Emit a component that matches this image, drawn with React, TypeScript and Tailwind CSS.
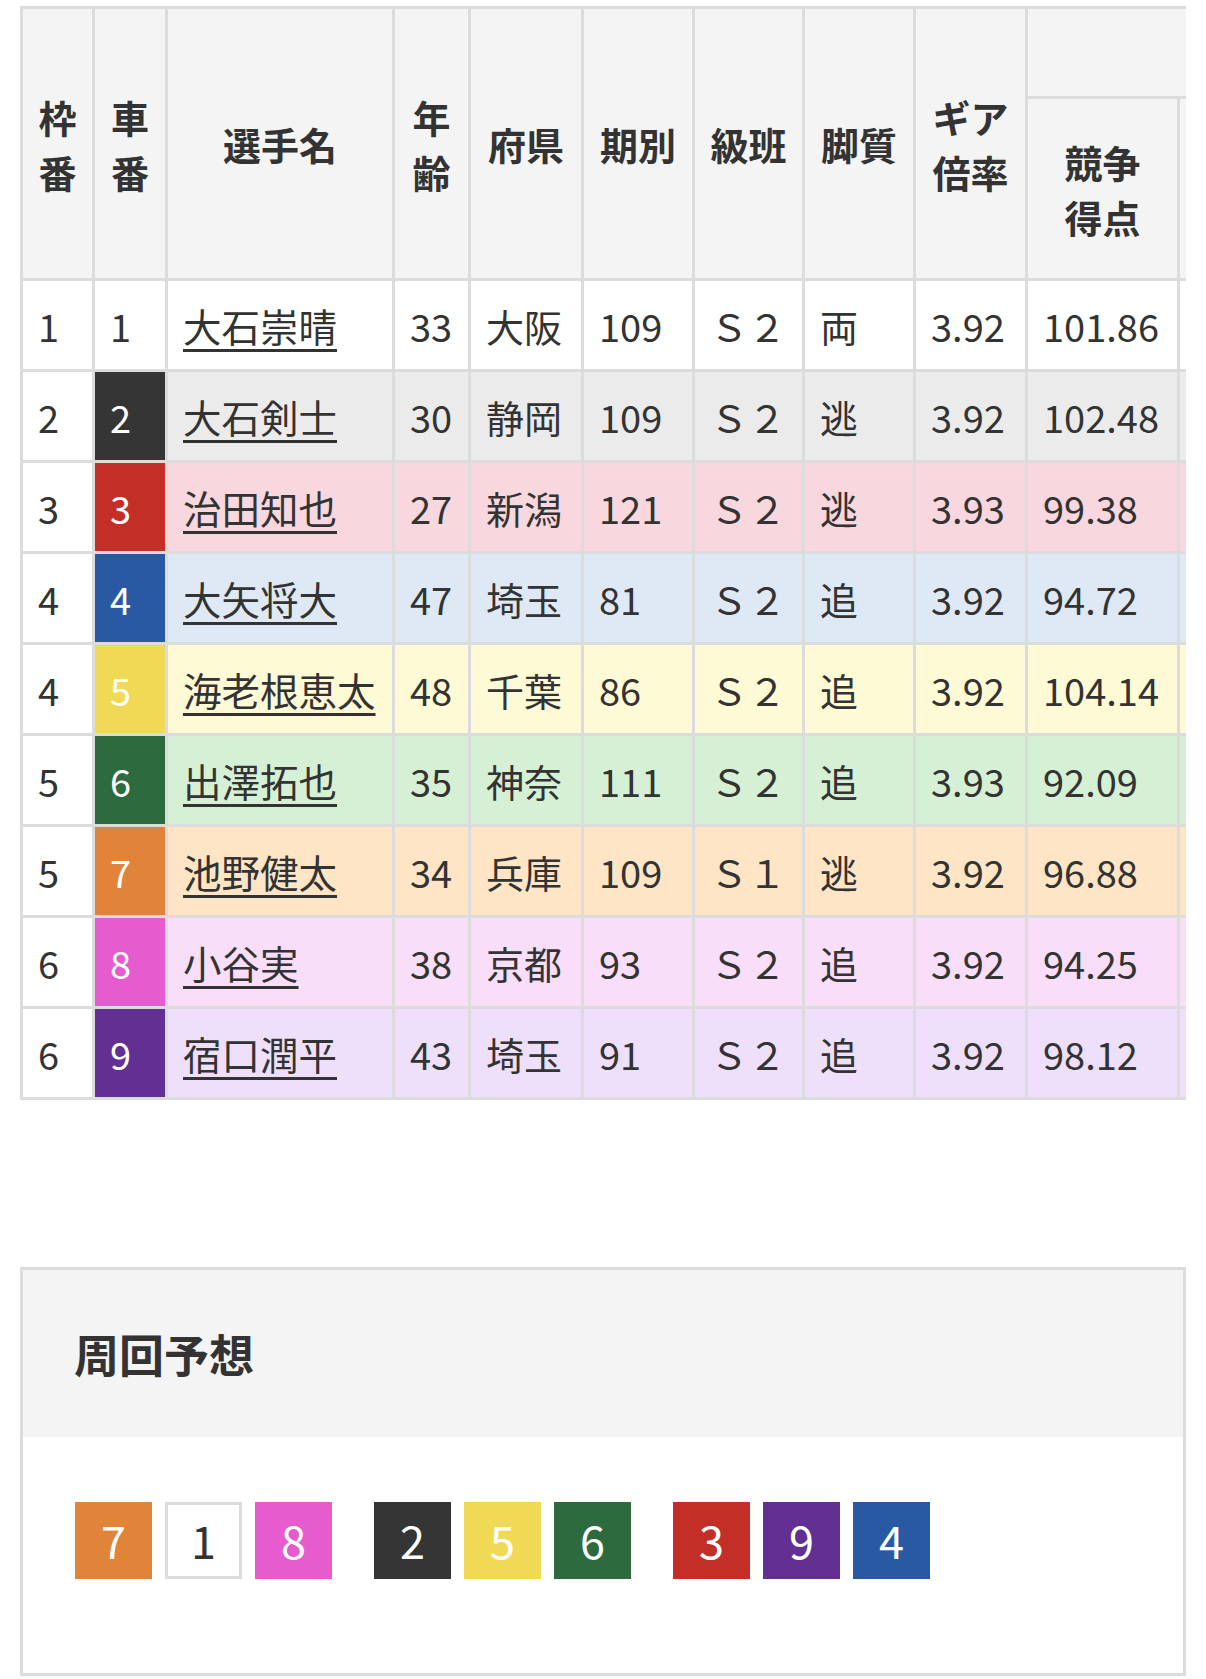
import React from 'react';

type Racer = {
  waku: number;
  car: number;
  name: string;
  age: number;
  pref: string;
  term: number;
  cls: string;
  leg: string;
  gear: string;
  score: string;
};

const racers: Racer[] = [
  { waku: 1, car: 1, name: '大石崇晴', age: 33, pref: '大阪', term: 109, cls: 'Ｓ２', leg: '両', gear: '3.92', score: '101.86' },
  { waku: 2, car: 2, name: '大石剣士', age: 30, pref: '静岡', term: 109, cls: 'Ｓ２', leg: '逃', gear: '3.92', score: '102.48' },
  { waku: 3, car: 3, name: '治田知也', age: 27, pref: '新潟', term: 121, cls: 'Ｓ２', leg: '逃', gear: '3.93', score: '99.38' },
  { waku: 4, car: 4, name: '大矢将大', age: 47, pref: '埼玉', term: 81, cls: 'Ｓ２', leg: '追', gear: '3.92', score: '94.72' },
  { waku: 4, car: 5, name: '海老根恵太', age: 48, pref: '千葉', term: 86, cls: 'Ｓ２', leg: '追', gear: '3.92', score: '104.14' },
  { waku: 5, car: 6, name: '出澤拓也', age: 35, pref: '神奈', term: 111, cls: 'Ｓ２', leg: '追', gear: '3.93', score: '92.09' },
  { waku: 5, car: 7, name: '池野健太', age: 34, pref: '兵庫', term: 109, cls: 'Ｓ１', leg: '逃', gear: '3.92', score: '96.88' },
  { waku: 6, car: 8, name: '小谷実', age: 38, pref: '京都', term: 93, cls: 'Ｓ２', leg: '追', gear: '3.92', score: '94.25' },
  { waku: 6, car: 9, name: '宿口潤平', age: 43, pref: '埼玉', term: 91, cls: 'Ｓ２', leg: '追', gear: '3.92', score: '98.12' },
];

// 車番の色
const carColor: Record<number, string> = {
  1: 'bg-white text-[#333]',
  2: 'bg-[#353535] text-white',
  3: 'bg-[#c32f27] text-white',
  4: 'bg-[#2a59a3] text-white',
  5: 'bg-[#f0da55] text-white',
  6: 'bg-[#2d6a3d] text-white',
  7: 'bg-[#e0843a] text-white',
  8: 'bg-[#e65ccf] text-white',
  9: 'bg-[#623093] text-white',
};

// 行の薄い色
const rowColor: Record<number, string> = {
  1: 'bg-white',
  2: 'bg-[#ebebeb]',
  3: 'bg-[#f8d7de]',
  4: 'bg-[#dfe9f5]',
  5: 'bg-[#fffad6]',
  6: 'bg-[#d5f0d4]',
  7: 'bg-[#fde5c5]',
  8: 'bg-[#f9defa]',
  9: 'bg-[#eee0fa]',
};

const lineup: number[][] = [[7, 1, 8], [2, 5, 6], [3, 9, 4]];

const th = 'border-t-[3px] border-l-[3px] border-[#dcdcdc] bg-[#f4f4f4] px-[15px] text-center font-bold leading-[55px]';
const td = 'border-t-[3px] border-l-[3px] border-[#dcdcdc] px-[15px] text-left leading-[55px] whitespace-nowrap';

const App: React.FC = () => {
  return (
    <div className="min-h-[1679px] bg-white font-['Noto_Sans_CJK_JP','Noto_Sans',sans-serif] text-[38px] text-[#333]">
      <div className="mx-[20px] overflow-hidden pt-[6px]">
        <table className="w-[1310px] table-fixed border-separate border-spacing-0 border-b-[3px] border-[#dcdcdc]">
          <colgroup>
            <col className="w-[72px]" />
            <col className="w-[73px]" />
            <col className="w-[227px]" />
            <col className="w-[76px]" />
            <col className="w-[113px]" />
            <col className="w-[111px]" />
            <col className="w-[110px]" />
            <col className="w-[111px]" />
            <col className="w-[112px]" />
            <col className="w-[152px]" />
            <col className="w-[153px]" />
          </colgroup>
          <thead>
            <tr className="h-[90px]">
              <th rowSpan={2} className={th}>枠<br />番</th>
              <th rowSpan={2} className={th}>車<br />番</th>
              <th rowSpan={2} className={th}>選手名</th>
              <th rowSpan={2} className={th}>年<br />齢</th>
              <th rowSpan={2} className={th}>府県</th>
              <th rowSpan={2} className={th}>期別</th>
              <th rowSpan={2} className={th}>級班</th>
              <th rowSpan={2} className={th}>脚質</th>
              <th rowSpan={2} className={th}>ギア<br />倍率</th>
              <th colSpan={2} className={th}></th>
            </tr>
            <tr className="h-[182px]">
              <th className={th}>競争<br />得点</th>
              <th className={th}></th>
            </tr>
          </thead>
          <tbody>
            {racers.map((r) => (
              <tr key={r.car} className="h-[91px]">
                <td className={`${td} bg-white`}>{r.waku}</td>
                <td className={`${td} ${carColor[r.car]}`}>{r.car}</td>
                <td className={`${td} ${rowColor[r.car]} text-[38.5px]`}>
                  <a href="#" className="underline decoration-[3px] underline-offset-[7px]">{r.name}</a>
                </td>
                <td className={`${td} ${rowColor[r.car]}`}>{r.age}</td>
                <td className={`${td} ${rowColor[r.car]}`}>{r.pref}</td>
                <td className={`${td} ${rowColor[r.car]}`}>{r.term}</td>
                <td className={`${td} ${rowColor[r.car]}`}>{r.cls}</td>
                <td className={`${td} ${rowColor[r.car]}`}>{r.leg}</td>
                <td className={`${td} ${rowColor[r.car]}`}>{r.gear}</td>
                <td className={`${td} ${rowColor[r.car]}`}>{r.score}</td>
                <td className={`${td} ${rowColor[r.car]}`}></td>
              </tr>
            ))}
          </tbody>
        </table>
      </div>

      <section className="mx-[20px] mt-[167px] border-[3px] border-[#dcdcdc]">
        <div className="bg-[#f4f4f4] px-[51px] py-[50px]">
          <h2 className="text-[45px] font-bold leading-[67px]">周回予想</h2>
        </div>
        <div className="flex gap-[42px] pl-[52px] pt-[65px] pb-[94px]">
          {lineup.map((group, i) => (
            <div key={i} className="flex gap-[13px]">
              {group.map((n) => (
                <div
                  key={n}
                  className={`flex h-[77px] w-[77px] items-center justify-center pb-[3px] text-[45px] leading-none ${carColor[n]} ${n === 1 ? 'border-[3px] border-[#dcdcdc]' : ''}`}
                >
                  {n}
                </div>
              ))}
            </div>
          ))}
        </div>
      </section>
    </div>
  );
};

export default App;
